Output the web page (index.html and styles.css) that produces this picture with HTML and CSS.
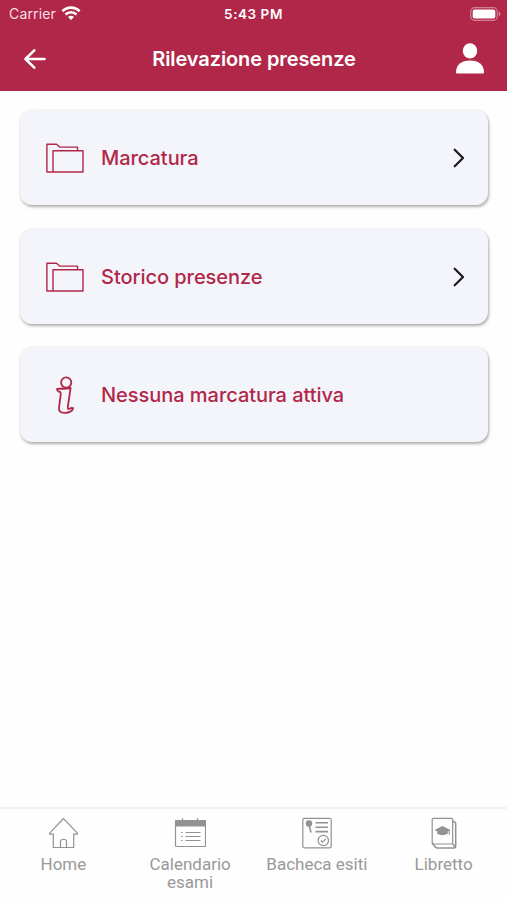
FILE: index.html
```html
<!DOCTYPE html>
<html lang="it">
<head>
    <meta charset="UTF-8">
    <meta name="viewport" content="width=device-width, initial-scale=1.0">
    <title>Rilevazione presenze</title>
    <link rel="stylesheet" href="styles.css">
</head>
<body>

    <!-- Intestazione -->
    <header class="header">
        <div class="status-bar">
            <div class="carrier">
                <span>Carrier</span>
                <svg width="20" height="15" viewBox="0 0 20 15" fill="none" stroke="#fff" stroke-width="2.6">
                    <path d="M1.4 5.2C6.3 .4 13.7 .4 18.6 5.2"/>
                    <path d="M4.5 8.5c3.2-3 7.8-3 11 0"/>
                    <path d="M7 10.9c1.8-1.6 4.2-1.6 6 0L10 14z" fill="#fff" stroke="none"/>
                </svg>
            </div>
            <span class="time">5:43 PM</span>
            <svg class="battery" width="31" height="14" viewBox="0 0 31 14">
                <rect x=".7" y=".7" width="26.6" height="12.6" rx="3.8" fill="none" stroke="#fff" stroke-opacity=".42" stroke-width="1.2"/>
                <rect x="2.7" y="2.6" width="22.6" height="8.8" rx="2" fill="#fff"/>
                <path d="M28.8 4.8c2 .6 2 3.8 0 4.4z" fill="#fff" fill-opacity=".5"/>
            </svg>
        </div>
        <div class="nav-bar">
            <svg width="28" height="20" viewBox="0 0 28 20" fill="none" stroke="#fff" stroke-width="2.5" stroke-linecap="round" stroke-linejoin="round">
                <path d="M20.5 10H1.6M10.3 1.3 1.5 10l8.8 8.7"/>
            </svg>
            <h1 class="title">Rilevazione presenze</h1>
            <svg width="28" height="31" viewBox="0 0 28 31" fill="#fff">
                <ellipse cx="14" cy="7.8" rx="7.2" ry="7.6"/>
                <path d="M0 29.5C0 21.6 5.6 17.5 14 17.5s14 4.1 14 12q0 1-1 1H1q-1 0-1-1z"/>
            </svg>
        </div>
    </header>

    <!-- Voci del menu -->
    <main class="menu">
        <a class="card">
            <svg class="card-icon" width="38" height="30" viewBox="0 0 38 30">
                <path d="M7 29H.9V1.2h9.6l3.2 2.9h17.8v3.6M7 7.7h30V29H7z"/>
            </svg>
            <span class="label">Marcatura</span>
            <svg class="chevron" width="12" height="20" viewBox="0 0 12 20"><path d="M1.7 1.7 10 10l-8.3 8.3"/></svg>
        </a>
        <a class="card">
            <svg class="card-icon" width="38" height="30" viewBox="0 0 38 30">
                <path d="M7 29H.9V1.2h9.6l3.2 2.9h17.8v3.6M7 7.7h30V29H7z"/>
            </svg>
            <span class="label">Storico presenze</span>
            <svg class="chevron" width="12" height="20" viewBox="0 0 12 20"><path d="M1.7 1.7 10 10l-8.3 8.3"/></svg>
        </a>
        <div class="card">
            <svg class="card-icon info" width="38" height="38" viewBox="0 0 38 38">
                <circle cx="20.2" cy="6.5" r="5.1"/>
                <path d="M11 12.9q7-.1 13.6-.9l-2.7 18.3c-.4 2.8.3 3.4 2 2.2q1.3-1 3.3-.5c-.8 3.4-3.7 4.8-8.4 4.8-5 0-6.3-2-5.7-6l1.6-12c.3-2.6-.2-3-1.9-3.3Q11 15.100 11 12.9z"/>
            </svg>
            <span class="label">Nessuna marcatura attiva</span>
        </div>
    </main>

    <!-- Barra di navigazione in basso -->
    <nav class="tab-bar">
        <a class="tab">
            <svg width="32" height="32" viewBox="0 0 32 32">
                <path d="M16.500 1.500 2.600 16.200v1h3.700v13.300h20.400V17.200h3.700v-1z"/>
                <path d="M13.500 30v-5.500q0-2 2-2h2q2 0 2 2V30"/>
            </svg>
            <span>Home</span>
        </a>
        <a class="tab">
            <svg width="32" height="32" viewBox="0 0 32 32">
                <rect x="1.500" y="4" width="30" height="25.500" rx="1"/>
                <path class="solid" d="M1 3h31v6.500H1z"/>
                <path d="M8.500 1.300v3M23.500 1.300v3M11.500 15.500h15M11.500 19.500h15M11.500 23.500h15"/>
                <path d="M7 15.500h1.600M7 19.500h1.600M7 23.500h1.600"/>
            </svg>
            <span>Calendario esami</span>
        </a>
        <a class="tab">
            <svg width="32" height="32" viewBox="0 0 32 32">
                <rect x="1.800" y="1.300" width="28.400" height="29.500" rx="1.500"/>
                <circle class="solid" cx="8" cy="6.500" r="3.200"/>
                <path d="m8 8 2 7.500" stroke-width="1.600"/>
                <path d="M14.500 5.800h12.500M14.500 10.200h12.500M14.500 14.600h12.500" stroke-width="1.600"/>
                <circle cx="22.300" cy="23.500" r="5.200"/>
                <path d="m19.900 23.500 1.700 1.700 3.200-3.400"/>
            </svg>
            <span>Bacheca esiti</span>
        </a>
        <a class="tab">
            <svg width="32" height="32" viewBox="0 0 32 32">
                <rect x="4.200" y="1.300" width="20.500" height="25.700" rx="1.200"/>
                <path d="M4.200 26 6.800 29.500q1 1.400 2.500 1.400h17q1.400 0 1.400-1.400V6.500q0-1.300-3-2.200M24.700 27l2.800 3.400" stroke-width="1.500"/>
                <path class="solid" d="m14.500 9 8 3.900-2.700 1.400v2.500q-5.300 2.700-10.600 0v-2.500l-2.700-1.400z"/>
                <path d="M21.300 13.200v4.200"/>
            </svg>
            <span>Libretto</span>
        </a>
    </nav>

</body>
</html>
```

FILE: styles.css
```css
:root {
    --primary: #b12749;
    --card-bg: #f4f5fa;
    --tab-color: #999999;
}

* {
    box-sizing: border-box;
}

body {
    margin: 0;
    height: 100vh;
    display: flex;
    flex-direction: column;
    background: #fefefe;
    font-family: Inter, "Liberation Sans", sans-serif;
}

svg {
    display: block;
    flex-shrink: 0;
}

/* Intestazione */
.header {
    height: 91px;
    background: var(--primary);
    color: #fff;
}

.status-bar {
    display: grid;
    grid-template-columns: 1fr auto 1fr;
    align-items: center;
    height: 27px;
    padding: 0 6px 0 9px;
    font-size: 14px;
}

.carrier {
    display: flex;
    align-items: center;
    gap: 5px;
    color: #f9dfe6;
    letter-spacing: 0.15px;
}

.time {
    font-size: 13.5px;
    font-weight: 600;
    letter-spacing: 0.55px;
    margin-right: 3px;
}

.battery {
    justify-self: end;
}

.nav-bar {
    display: flex;
    align-items: center;
    justify-content: space-between;
    height: 63px;
    padding: 0 23px 0 24px;
}

.title {
    margin: 0;
    font-size: 20px;
    font-weight: 600;
    letter-spacing: -0.1px;
}

/* Schede */
.menu {
    flex: 1;
    display: flex;
    flex-direction: column;
    gap: 23.5px;
    padding: 19px 19px 0 20px;
}

.card {
    display: flex;
    align-items: center;
    height: 95px;
    padding: 1px 23px 0 25.5px;
    border-radius: 12px;
    background: var(--card-bg);
    box-shadow: 1px 2px 3px rgba(0, 0, 0, 0.3), 0 0 2px rgba(0, 0, 0, 0.1);
    color: var(--primary);
    font-size: 20px;
    font-weight: 500;
    letter-spacing: -0.04px;
}

.card-icon {
    margin-right: 17.5px;
    fill: none;
    stroke: var(--primary);
    stroke-width: 1.4;
    stroke-linejoin: round;
}

.info {
    stroke-width: 1.8;
}

.label {
    flex: 1;
}

.chevron {
    fill: none;
    stroke: #1c1c20;
    stroke-width: 2.3;
    stroke-linecap: round;
    stroke-linejoin: round;
}

/* Barra inferiore */
.tab-bar {
    display: grid;
    grid-template-columns: repeat(4, 1fr);
    height: 93px;
    padding-top: 8px;
    border-top: 2px solid #f2f2f2;
    color: var(--tab-color);
    font-family: Roboto, "Liberation Sans", sans-serif;
    font-size: 17px;
    line-height: 18px;
    text-align: center;
}

.tab {
    display: flex;
    flex-direction: column;
    align-items: center;
    gap: 6px;
    padding: 0 10px;
}

.tab svg {
    fill: none;
    stroke: #929292;
    stroke-width: 1.2;
}

.tab .solid {
    fill: #929292;
    stroke: none;
}
```
